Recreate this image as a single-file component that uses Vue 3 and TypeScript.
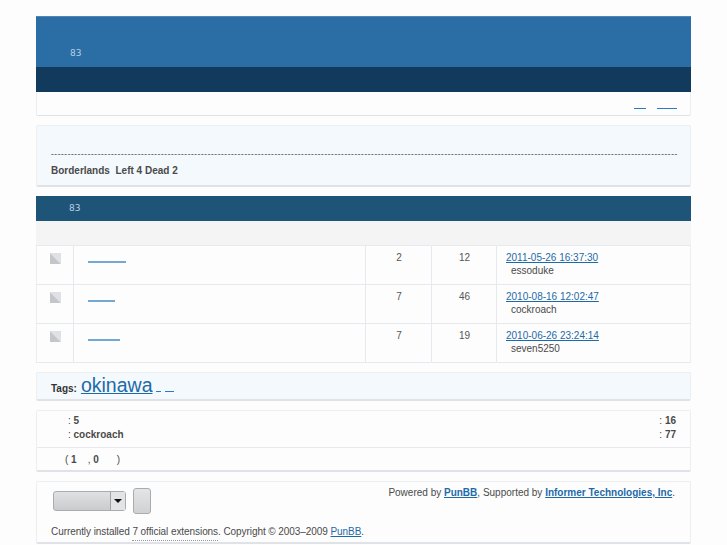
<script setup lang="ts">
interface Topic {
  linkWidth: number
  replies: number
  views: number
  date: string
  user: string
}

const topics: Topic[] = [
  { linkWidth: 38, replies: 2, views: 12, date: '2011-05-26 16:37:30', user: 'essoduke' },
  { linkWidth: 27, replies: 7, views: 46, date: '2010-08-16 12:02:47', user: 'cockroach' },
  { linkWidth: 32, replies: 7, views: 19, date: '2010-06-26 23:24:14', user: 'seven5250' },
]

const dashes = '-'.repeat(188)
</script>

<template>
  <div class="page">
    <header class="brd top">
      <div class="title"><span class="count">83</span></div>
      <div class="nav"></div>
      <div class="welcome">
        <a class="blank" style="width: 12px"></a>
        <a class="blank" style="width: 20px"></a>
      </div>
    </header>

    <section class="brd announce">
      <div class="dashes">{{ dashes }}</div>
      <strong>Borderlands &nbsp;Left 4 Dead 2</strong>
    </section>

    <section class="forum">
      <div class="forum-head"><span class="count">83</span></div>
      <div class="forum-sub"></div>
      <div v-for="topic in topics" :key="topic.date" class="row">
        <div class="cell icon-cell">
          <svg width="11" height="11" viewBox="0 0 11 11">
            <rect width="11" height="11" fill="#e4e6e9" />
            <path d="M0 0 L11 11 L0 11 Z" fill="#c3c6ca" />
            <path d="M0 0 L11 0 L11 11 Z" fill="#dfe1e4" />
          </svg>
        </div>
        <div class="cell subject"><a class="blank topic-link" :style="{ width: topic.linkWidth + 'px' }"></a></div>
        <div class="cell num">{{ topic.replies }}</div>
        <div class="cell num">{{ topic.views }}</div>
        <div class="cell last">
          <a href="#">{{ topic.date }}</a>
          <span class="by">{{ topic.user }}</span>
        </div>
      </div>
    </section>

    <section class="brd tags">
      <strong>Tags:</strong>
      <a href="#" class="tag">okinawa</a>
      <a class="blank" style="width: 5px"></a>
      <a class="blank" style="width: 9px"></a>
    </section>

    <section class="brd stats">
      <div class="stats-top">
        <div class="col-left">
          <div>: <strong>5</strong></div>
          <div>: <strong>cockroach</strong></div>
        </div>
        <div class="col-right">
          <div>: <strong>16</strong></div>
          <div>: <strong>77</strong></div>
        </div>
      </div>
      <div class="online">( <strong>1</strong><span class="gap-a"></span>, <strong>0</strong><span class="gap-b"></span>)</div>
    </section>

    <footer class="brd foot">
      <div class="foot-top">
        <div class="controls">
          <div class="fake-select">
            <span class="arrow"></span>
          </div>
          <div class="fake-button"></div>
        </div>
        <p class="powered">
          Powered by <a href="#"><b>PunBB</b></a>, Supported by <a href="#"><b>Informer Technologies, Inc</b></a>.
        </p>
      </div>
      <p class="copy">
        Currently installed <span class="dotted">7 official extensions</span>. Copyright © 2003–2009 <a href="#">PunBB</a>.
      </p>
    </footer>
  </div>
</template>

<style scoped>
.page {
  width: 655px;
  margin: 0 auto;
  padding: 16px 0 0;
  font-family: "Liberation Sans", Arial, sans-serif;
  font-size: 10px;
  line-height: 13px;
  color: #4a4a4a;
}

a {
  color: #1d6aa8;
  text-decoration: underline;
}

.brd {
  box-sizing: border-box;
  border: 1px solid #eceef0;
  border-bottom: 2px solid #dfe2e6;
  border-radius: 2px;
  background: #fdfdfd;
}

.blank {
  display: inline-block;
  height: 1px;
  background: #2a7ac4;
  vertical-align: baseline;
}

.count {
  font-family: "DejaVu Sans", sans-serif;
  font-size: 9px;
  color: #b9d0e3;
}

.top {
  height: 100px;
  border: 0;
  border-bottom: 1px solid #dfe2e6;
}

.title {
  box-sizing: border-box;
  height: 51px;
  padding: 29px 0 0 34px;
  background: #2a6ea5;
  border-top: 1px solid #4f86b3;
}

.nav {
  height: 25px;
  background: #113a5d;
}

.welcome {
  display: flex;
  justify-content: flex-end;
  gap: 11px;
  height: 23px;
  padding: 16px 13px 0 0;
  box-sizing: border-box;
  border-left: 1px solid #eceef0;
  border-right: 1px solid #eceef0;
}

.announce {
  height: 62px;
  margin-top: 9px;
  padding: 21px 14px 0;
  background: #f4f9fd;
}

.dashes {
  height: 13px;
  margin: 0 -2px 4px 0;
  white-space: nowrap;
  font-size: 8px;
  font-weight: bold;
  letter-spacing: 0.67px;
  color: #666;
}

.forum {
  margin-top: 9px;
  background: #fdfdfd;
}

.forum-head {
  box-sizing: border-box;
  height: 25px;
  padding: 6px 0 0 33px;
  background: #1f5479;
  line-height: 12px;
}

.forum-sub {
  height: 25px;
  background: #f4f4f5;
  border-bottom: 1px solid #e6e9ee;
  box-sizing: border-box;
}

.row {
  display: grid;
  grid-template-columns: 36px 292px 66px 65px 194px;
  height: 39px;
  box-sizing: border-box;
  border-bottom: 1px solid #e6e9ee;
  border-left: 1px solid #eceef0;
  border-right: 1px solid #eceef0;
}

.cell {
  box-sizing: border-box;
  border-left: 1px solid #e6e9ee;
  padding-top: 5px;
}

.icon-cell {
  border-left: 0;
  padding: 7px 0 0 13px;
}

.icon-cell svg {
  display: block;
}

.subject {
  padding: 15px 0 0 14px;
}

.topic-link {
  display: block;
  height: 2px;
  background: #74a8d2;
}

.num {
  padding-left: 1px;
  text-align: center;
  color: #555;
}

.last {
  padding-left: 9px;
}

.last a,
.by {
  display: block;
}

.by {
  padding-left: 5px;
}

.tags {
  display: flex;
  align-items: baseline;
  gap: 3px;
  height: 29px;
  margin-top: 9px;
  padding: 0 14px;
  background: #f4f9fd;
}

.tags strong {
  margin-right: 1px;
  color: #333;
}

.tag {
  font-size: 19.5px;
  line-height: 24px;
  margin-right: 1px;
}

.tags .blank {
  margin-right: 1px;
}

.stats {
  margin-top: 9px;
  height: 62px;
}

.stats-top {
  display: flex;
  justify-content: space-between;
  height: 37px;
  box-sizing: border-box;
  padding: 3px 14px 0 31px;
  border-bottom: 1px solid #e6e9ee;
  line-height: 14px;
}

.online {
  padding: 5px 0 0 28px;
  white-space: pre-wrap;
}

.gap-a {
  display: inline-block;
  width: 11px;
}

.gap-b {
  display: inline-block;
  width: 18px;
}

.foot {
  margin-top: 9px;
  height: 63px;
  padding: 0 14px;
}

.foot-top {
  display: flex;
  justify-content: space-between;
  height: 43px;
}

.controls {
  display: flex;
  align-items: center;
  gap: 7px;
  padding: 6px 0 0 2px;
  height: 26px;
}

.fake-select {
  box-sizing: border-box;
  position: relative;
  width: 73px;
  height: 20px;
  border: 1px solid #a9acae;
  border-radius: 3px;
  background: linear-gradient(#e0e1e3, #c9cbce);
}

.arrow {
  position: absolute;
  top: 0;
  right: 0;
  width: 14px;
  height: 18px;
  border-left: 1px solid #a0a3a6;
  background: #e3e4e6;
}

.arrow::after {
  content: "";
  position: absolute;
  left: 3px;
  top: 7px;
  border: 4px solid transparent;
  border-top: 4px solid #111;
  border-bottom: 0;
}

.fake-button {
  box-sizing: border-box;
  width: 18px;
  height: 26px;
  border: 1px solid #a9acae;
  border-radius: 3px;
  background: linear-gradient(#e4e5e6, #cfd1d3);
}

.powered {
  margin: 4px 1px 0 0;
}

.copy {
  margin: 0;
  letter-spacing: -0.07px;
}

.dotted {
  border-bottom: 1px dotted #999;
  padding-bottom: 3px;
}
</style>

<style>
html,
body {
  background: #fdfdfd;
}
</style>
